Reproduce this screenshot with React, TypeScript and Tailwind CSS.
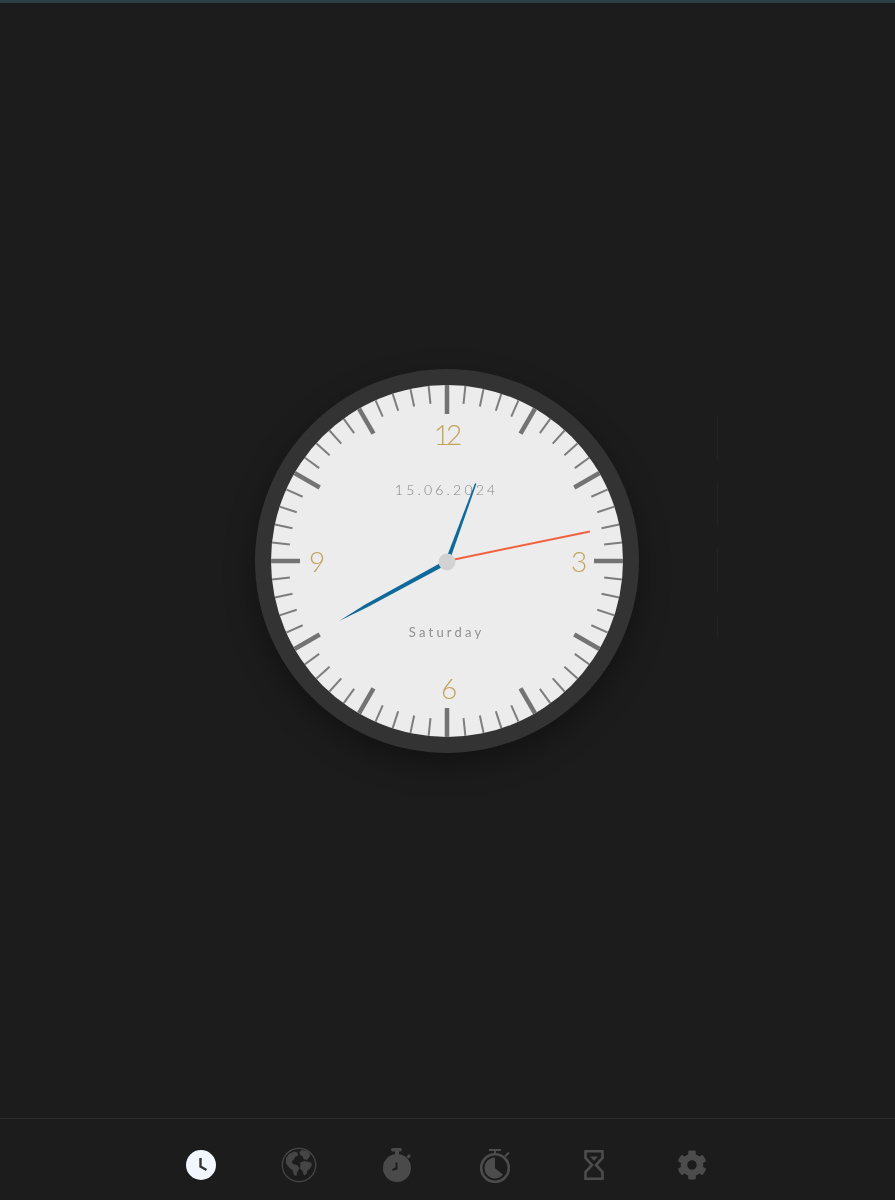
import { FaCog } from "react-icons/fa";

const CX = 176;
const CY = 176;

function Ticks() {
  const items = [];
  for (let i = 0; i < 60; i++) {
    const major = i % 5 === 0;
    const len = major ? 29 : 18;
    items.push(
      <line
        key={i}
        x1={CX}
        y1={0}
        x2={CX}
        y2={len}
        stroke={major ? "#737373" : "#7d7d7d"}
        strokeWidth={major ? 4.5 : 2}
        transform={`rotate(${i * 6} ${CX} ${CY})`}
      />
    );
  }
  return <g>{items}</g>;
}

function GlobeIcon() {
  return (
    <svg width="36" height="36" viewBox="0 0 36 36" className="text-[#454545]">
      <circle cx="18" cy="18" r="16.700" fill="none" stroke="currentColor" strokeWidth="1.300" />
      <path
        fill="currentColor"
        d="M20.500 3l5.500 1 3.500 3.500-1.500 3-2 2.500-3.500-1-1-3-2.500-1-.5-3zM19 15.500l4.500-1.500 6.500 1.500 1 2.500-2 3.500-2.500 2-1 3.500-2.500 1.500-1.500-4.500-2.500-2.500 .5-3.500zM5 11l3-4 5-2.500 3.500 1 .5 3-3 1.500-1.500 3-2 1.500 1.500 2.500 4 1 2.500 3-2.500 4.500-.5 3.500-2.500-1-1.500-5-3-2-3.500-4.500z"
      />
    </svg>
  );
}

function StopwatchIcon() {
  return (
    <svg width="30" height="36" viewBox="0 0 30 36" className="text-[#4a4a4a]">
      <circle cx="15" cy="21" r="14" fill="currentColor" />
      <rect x="9" y="1" width="11" height="3.500" rx="1.700" fill="currentColor" />
      <rect x="13" y="3" width="4" height="5" fill="currentColor" />
      <path d="M24.500 9.500l2.500-2.500 2 2-2.500 2.500z" fill="currentColor" />
      <path d="M14.500 15.500v6l-4 1.500" fill="none" stroke="#1c1c1c" strokeWidth="2" />
    </svg>
  );
}

function TimerIcon() {
  return (
    <svg width="36" height="36" viewBox="0 0 36 36" className="text-[#4c4c4c]">
      <circle cx="17" cy="21" r="13.800" fill="none" stroke="currentColor" strokeWidth="2.600" />
      <path fill="currentColor" d="M17 21V10.500A10.500 10.500 0 1 0 25 27.800z" />
      <path stroke="currentColor" strokeWidth="2" fill="none" d="M11 3h12M17 3v4M27 9.500l4-4" />
    </svg>
  );
}

function HourglassIcon() {
  return (
    <svg width="24" height="32" viewBox="0 0 24 32" className="text-[#4c4c4c]">
      <path
        fill="none"
        stroke="currentColor"
        strokeWidth="2.600"
        d="M3.500 2.300h17v6.700L14 16l6.500 7v6.700h-17V23L10 16 3.500 9z"
      />
      <path fill="currentColor" d="M8 7.500h8L12 12z" />
    </svg>
  );
}

export default function App() {
  return (
    <div className="relative flex h-[1200px] w-[895px] flex-col overflow-hidden bg-[#1c1c1c] font-['Lato',sans-serif]">
      <div className="h-[3px] bg-[#2c3f44]" />
      <main className="flex h-[1115px] items-center justify-center pr-px pt-px">
        <div className="flex h-[384px] w-[384px] items-center justify-center rounded-full bg-[#333333] shadow-[0_12px_30px_rgba(0,0,0,0.35)]">
          <svg width="352" height="352" viewBox="0 0 352 352" className="block rounded-full bg-[#ececec] blur-[0.4px]">
            <Ticks />
            <g fill="#c4a25a" fontWeight="300" fontSize="28" textAnchor="middle">
              <text x="175" y="60" letterSpacing="-4">12</text>
              <text x="178" y="314">6</text>
              <text x="46" y="187">9</text>
              <text x="308" y="187">3</text>
            </g>
            <text x="175.600" y="110" textAnchor="middle" fontSize="14" letterSpacing="3.200" fontWeight="300" fill="#858585">
              15.06.2024
            </text>
            <text x="175.600" y="252" textAnchor="middle" fontSize="13" letterSpacing="3.200" fill="#8f8f8f">
              Saturday
            </text>
            <polygon points="174.100,176.300 177.900,177.700 205.400,98.800 204,98.200" fill="#0f6a9b" />
            <polygon points="174.900,175.100 177,178.900 95.800,222.500 68,236 94.200,219.500" fill="#0f6a9b" />
            <line x1="176" y1="176" x2="319" y2="146.500" stroke="#f0623f" strokeWidth="2" />
            <circle cx="176" cy="177" r="8.500" fill="#d2d2d2" />
          </svg>
        </div>
      </main>
      <div className="absolute left-[717px] top-[415px] flex w-px flex-col gap-[23px]">
        <div className="h-[44px] bg-[#232323]" />
        <div className="h-[44px] bg-[#232323]" />
        <div className="h-[44px] bg-[#232323]" />
        <div className="h-[22px] bg-[#232323]" />
      </div>
      <nav className="flex h-[82px] items-center justify-center border-t border-[#2e2e2e] pr-[2px] pt-[11px]">
        <div className="flex w-[98.2px] justify-center">
          <span className="flex h-[30px] w-[30px] items-center justify-center rounded-full bg-[#f2f7ff] blur-[0.4px]">
            <svg width="30" height="30" viewBox="0 0 30 30">
              <path d="M14.500 8v8.500l6 3.500" fill="none" stroke="#333333" strokeWidth="2.400" />
            </svg>
          </span>
        </div>
        <div className="flex w-[98.2px] justify-center blur-[0.4px]"><GlobeIcon /></div>
        <div className="flex w-[98.2px] justify-center blur-[0.4px]"><StopwatchIcon /></div>
        <div className="flex w-[98.2px] justify-center blur-[0.4px]"><TimerIcon /></div>
        <div className="flex w-[98.2px] justify-center blur-[0.4px]"><HourglassIcon /></div>
        <div className="flex w-[98.2px] justify-center blur-[0.4px]"><FaCog size={30} color="#4c4c4c" /></div>
      </nav>
    </div>
  );
}
